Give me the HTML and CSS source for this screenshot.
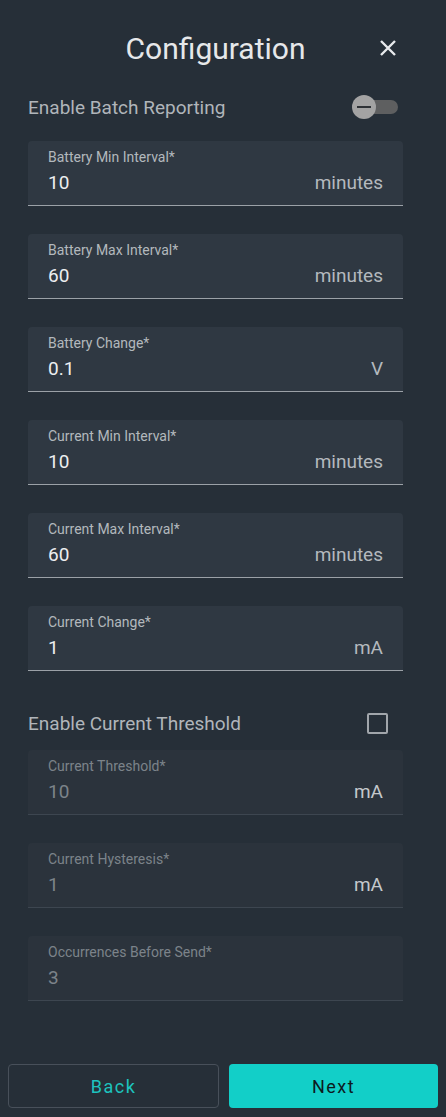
FILE: index.html
```html
<!DOCTYPE html>
<html lang="en">
<head>
    <meta charset="UTF-8">
    <title>Configuration</title>
    <link rel="stylesheet" href="styles.css">
</head>
<body>
    <div class="panel">
        <!--header-->
        <div class="head">
            <h1>Configuration</h1>
            <span class="close">
                <svg width="18" height="18" viewBox="0 0 18 18"><path d="M2 2L16 16M16 2L2 16" stroke="#e8eaed" stroke-width="2.4" fill="none"/></svg>
            </span>
        </div>

        <div class="row">
            <span>Enable Batch Reporting</span>
            <span class="toggle"><i></i></span>
        </div>

        <div class="field"><label>Battery Min Interval*</label><p><b>10</b><em>minutes</em></p></div>
        <div class="field"><label>Battery Max Interval*</label><p><b>60</b><em>minutes</em></p></div>
        <div class="field"><label>Battery Change*</label><p><b>0.1</b><em>V</em></p></div>
        <div class="field"><label>Current Min Interval*</label><p><b>10</b><em>minutes</em></p></div>
        <div class="field"><label>Current Max Interval*</label><p><b>60</b><em>minutes</em></p></div>
        <div class="field"><label>Current Change*</label><p><b>1</b><em>mA</em></p></div>

        <div class="row row2">
            <span>Enable Current Threshold</span>
            <span class="check"></span>
        </div>

        <div class="field off"><label>Current Threshold*</label><p><b>10</b><em>mA</em></p></div>
        <div class="field off"><label>Current Hysteresis*</label><p><b>1</b><em>mA</em></p></div>
        <div class="field off"><label>Occurrences Before Send*</label><p><b>3</b><em></em></p></div>
    </div>

    <div class="foot">
        <button class="back">Back</button>
        <button class="next">Next</button>
    </div>
</body>
</html>
```

FILE: styles.css
```css
*{margin:0;padding:0;box-sizing:border-box;}

body{
    background-color: #262f38;
    font-family: Roboto, "Liberation Sans", sans-serif;
    width: 446px;
    height: 1117px;
}

.panel{
    padding: 24px 43px 0 28px;
}

.head{
    position: relative;
    height: 48px;
    display: flex;
    align-items: center;
    justify-content: center;
}
.head h1{
    font-size: 30px;
    font-weight: 400;
    color: #e6e8ea;
}
.head .close{
    position: absolute;
    right: 6px;
    top: 15px;
    width: 18px;
    height: 18px;
}

.row{
    height: 40px;
    margin-top: 15px;
    margin-bottom: 14px;
    display: flex;
    align-items: center;
    justify-content: space-between;
    font-size: 19px;
    color: #b0b5ba;
}
.row2{
    margin-top: 32px;
    margin-bottom: 7px;
}

.toggle{
    position: relative;
    width: 34px;
    height: 14px;
    margin-right: 5px;
    border-radius: 7px;
    background-color: #5e5f60;
}
.toggle i{
    position: absolute;
    left: -12px;
    top: -5px;
    width: 24px;
    height: 24px;
    border-radius: 50%;
    background-color: #a3a3a3;
}
.toggle i::after{
    content: "";
    position: absolute;
    left: 5px;
    top: 11px;
    width: 14px;
    height: 2px;
    background-color: #2e3236;
}

.check{
    width: 21px;
    height: 21px;
    margin-right: 15px;
    border: 2px solid #a1a6ab;
    border-radius: 2px;
}

.field{
    height: 65px;
    margin-bottom: 28px;
    padding: 8px 20px 0 20px;
    background-color: #2f3842;
    border-radius: 4px 4px 0 0;
    border-bottom: 1px solid #9ba1a7;
}
.field label{
    display: block;
    font-size: 14px;
    line-height: 16px;
    color: #b3b8bd;
}
.field p{
    margin-top: 6px;
    display: flex;
    justify-content: space-between;
    line-height: 24px;
    font-size: 19px;
}
.field b{
    font-weight: 400;
    color: #eceef0;
}
.field em{
    font-style: normal;
    color: #b4b9be;
}

.field.off{
    background-color: #2b333c;
    border-bottom-color: #3d4650;
}
.field.off label{
    color: #7c838a;
}
.field.off b{
    color: #7c838a;
}
.field.off em{
    color: #c4c8cc;
}

.foot{
    margin-top: 63px;
    padding: 0 8px;
    display: flex;
    gap: 10px;
}
.foot button{
    flex: 1;
    height: 44px;
    border-radius: 4px;
    font-family: Roboto, "Liberation Sans", sans-serif;
    font-size: 18px;
    letter-spacing: 1.5px;
    cursor: pointer;
}
.foot .back{
    background-color: transparent;
    border: 1px solid #48505a;
    color: #1dc3be;
}
.foot .next{
    background-color: #12cfc8;
    border: none;
    color: #0d1a1e;
}
```
